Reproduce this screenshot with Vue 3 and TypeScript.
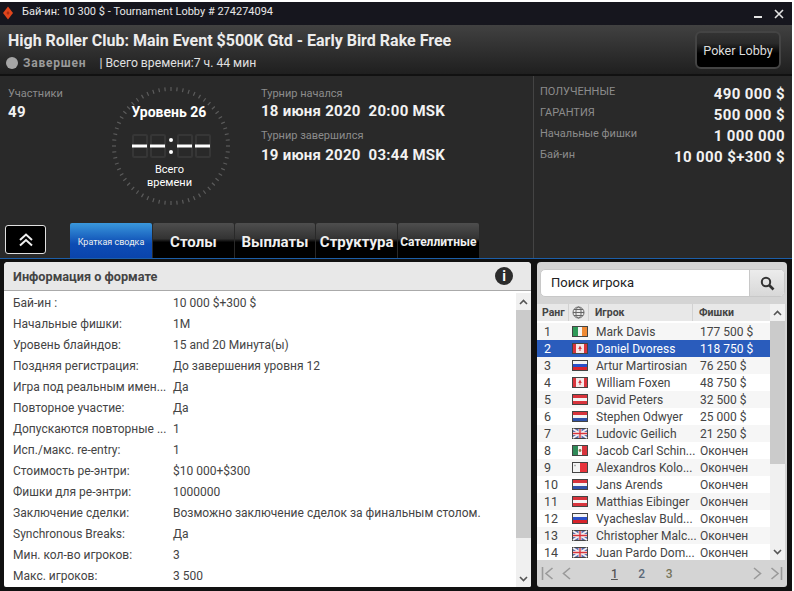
<script setup lang="ts">
interface Player {
  rank: number
  flag: string
  name: string
  chips: string
}

const info: [string, string][] = [
  ['Бай-ин :', '10 000 $+300 $'],
  ['Начальные фишки:', '1M'],
  ['Уровень блайндов:', '15 and 20 Минута(ы)'],
  ['Поздняя регистрация:', 'До завершения уровня 12'],
  ['Игра под реальным имен...', 'Да'],
  ['Повторное участие:', 'Да'],
  ['Допускаются повторные ...', '1'],
  ['Исп./макс. re-entry:', '1'],
  ['Стоимость ре-энтри:', '$10 000+$300'],
  ['Фишки для ре-энтри:', '1000000'],
  ['Заключение сделки:', 'Возможно заключение сделок за финальным столом.'],
  ['Synchronous Breaks:', 'Да'],
  ['Мин. кол-во игроков:', '3'],
  ['Макс. игроков:', '3 500'],
]

const players: Player[] = [
  { rank: 1, flag: 'ie', name: 'Mark Davis', chips: '177 500 $' },
  { rank: 2, flag: 'ca', name: 'Daniel Dvoress', chips: '118 750 $' },
  { rank: 3, flag: 'ru', name: 'Artur Martirosian', chips: '76 250 $' },
  { rank: 4, flag: 'ca', name: 'William Foxen', chips: '48 750 $' },
  { rank: 5, flag: 'at', name: 'David Peters', chips: '32 500 $' },
  { rank: 6, flag: 'nl', name: 'Stephen Odwyer', chips: '25 000 $' },
  { rank: 7, flag: 'gb', name: 'Ludovic Geilich', chips: '21 250 $' },
  { rank: 8, flag: 'mx', name: 'Jacob Carl Schin...', chips: 'Окончен' },
  { rank: 9, flag: 'mt', name: 'Alexandros Kolo...', chips: 'Окончен' },
  { rank: 10, flag: 'nl', name: 'Jans Arends', chips: 'Окончен' },
  { rank: 11, flag: 'at', name: 'Matthias Eibinger', chips: 'Окончен' },
  { rank: 12, flag: 'ru', name: 'Vyacheslav Buld...', chips: 'Окончен' },
  { rank: 13, flag: 'gb', name: 'Christopher Malc...', chips: 'Окончен' },
  { rank: 14, flag: 'gb', name: 'Juan Pardo Dom...', chips: 'Окончен' },
]

const stripes: Record<string, string[]> = {
  ru: ['#f4f4f4', '#2a4fc8', '#d8242c'],
  nl: ['#d8343c', '#f4f4f4', '#2f52a8'],
  at: ['#d8343c', '#f4f4f4', '#d8343c'],
}

const ticks = Array.from({ length: 60 }, (_, i) => {
  const a = (i * 6 * Math.PI) / 180
  return {
    x1: 60 + Math.sin(a) * 55,
    y1: 60 - Math.cos(a) * 55,
    x2: 60 + Math.sin(a) * 59,
    y2: 60 - Math.cos(a) * 59,
  }
})

const ghostDigits = [0, 18, 45, 63]
</script>

<template>
  <div class="window">
    <div class="titlebar">
      <svg class="logo" width="12" height="14" viewBox="0 0 12 14">
        <path d="M6 0.5 11 7 6 13.5 1 7Z" fill="#e0451c" />
        <path d="M6 5 7.6 7 6 9 4.4 7Z" fill="#a82c14" />
      </svg>
      <span class="title-text">Бай-ин: 10 300 $ - Tournament Lobby # 274274094</span>
      <span class="win-min"></span>
      <svg class="win-close" width="10" height="10" viewBox="0 0 10 10">
        <path d="M1 1 9 9M9 1 1 9" stroke="#e4e4e4" stroke-width="1.6" />
      </svg>
    </div>

    <div class="header">
      <div class="head-left">
        <div class="event-name">High Roller Club: Main Event $500K Gtd - Early Bird Rake Free</div>
        <div class="status">
          <span class="dot"></span>
          <span class="status-name">Завершен</span>
          <span class="status-time">| Всего времени:7 ч. 44 мин</span>
        </div>
      </div>
      <button class="lobby-btn">Poker Lobby</button>
    </div>

    <div class="summary">
      <div class="summary-left">
        <div class="summary-top">
          <div class="players-col">
            <div class="label">Участники</div>
            <div class="big">49</div>
          </div>
          <div class="clock">
            <svg class="ring" width="120" height="120" viewBox="0 0 120 120">
              <line
                v-for="(t, i) in ticks"
                :key="i"
                :x1="t.x1"
                :y1="t.y1"
                :x2="t.x2"
                :y2="t.y2"
                stroke="#5c5c5c"
                stroke-width="1.2"
              />
            </svg>
            <div class="level">Уровень 26</div>
            <svg class="digits" width="80" height="24" viewBox="0 0 80 24">
              <rect
                v-for="x in ghostDigits"
                :key="x"
                :x="x + 1"
                y="1"
                width="14"
                height="22"
                rx="1"
                fill="none"
                stroke="#363636"
                stroke-width="2"
              />
              <path d="M0 12H15M18 12H33M45 12H60M63 12H78" stroke="#fff" stroke-width="3" />
              <circle cx="39" cy="6" r="2" fill="#fff" />
              <circle cx="39" cy="18" r="2" fill="#fff" />
            </svg>
            <div class="clock-note">Всего<br />времени</div>
          </div>
          <div class="dates">
            <div class="label">Турнир начался</div>
            <div class="big date">18 июня 2020&nbsp; 20:00 MSK</div>
            <div class="label second">Турнир завершился</div>
            <div class="big date last">19 июня 2020&nbsp; 03:44 MSK</div>
          </div>
        </div>
        <div class="tabs-row">
          <button class="collapse">
            <svg width="16" height="14" viewBox="0 0 16 14">
              <path d="M2 7 8 1.5 14 7M2 12.5 8 7 14 12.5" fill="none" stroke="#f0f0f0" stroke-width="2" />
            </svg>
          </button>
          <div class="tabs">
            <div class="tab active">Краткая сводка</div>
            <div class="tab">Столы</div>
            <div class="tab">Выплаты</div>
            <div class="tab">Структура</div>
            <div class="tab small">Сателлитные</div>
          </div>
        </div>
      </div>
      <div class="prizes">
        <div class="prize"><span class="label">ПОЛУЧЕННЫЕ</span><span class="big">490 000 $</span></div>
        <div class="prize"><span class="label">ГАРАНТИЯ</span><span class="big">500 000 $</span></div>
        <div class="prize"><span class="label">Начальные фишки</span><span class="big">1 000 000</span></div>
        <div class="prize"><span class="label">Бай-ин</span><span class="big">10 000 $+300 $</span></div>
      </div>
    </div>

    <div class="content">
      <section class="info-panel">
        <div class="info-head">
          <span>Информация о формате</span>
          <span class="info-icon">i</span>
        </div>
        <div class="info-body">
          <div class="info-rows">
            <div v-for="row in info" :key="row[0]" class="info-row">
              <span class="info-key">{{ row[0] }}</span>
              <span>{{ row[1] }}</span>
            </div>
          </div>
          <div class="scrollbar wide">
            <svg class="arrow" width="9" height="6" viewBox="0 0 9 6"><path d="M1 5 4.5 1.5 8 5" fill="none" stroke="#555" stroke-width="1.6" /></svg>
            <div class="track"><div class="thumb info-thumb"></div></div>
            <svg class="arrow" width="9" height="6" viewBox="0 0 9 6"><path d="M1 1 4.5 4.5 8 1" fill="none" stroke="#555" stroke-width="1.6" /></svg>
          </div>
        </div>
      </section>

      <section class="players-panel">
        <div class="search">
          <span class="search-text">Поиск игрока</span>
          <span class="search-btn">
            <svg width="15" height="15" viewBox="0 0 15 15">
              <circle cx="6" cy="6" r="4.2" fill="none" stroke="#333" stroke-width="2" />
              <path d="M9 9 13.5 13.5" stroke="#333" stroke-width="2.6" />
            </svg>
          </span>
        </div>
        <div class="table-wrap">
          <div class="table">
            <div class="thead">
              <span class="c-rank">Ранг</span>
              <span class="c-flag">
                <svg width="13" height="13" viewBox="0 0 13 13" fill="none" stroke="#666" stroke-width="1">
                  <circle cx="6.5" cy="6.5" r="5.5" />
                  <ellipse cx="6.5" cy="6.5" rx="2.6" ry="5.5" />
                  <path d="M1 6.5H12M2 3.5H11M2 9.5H11" />
                </svg>
              </span>
              <span class="c-name">Игрок</span>
              <span class="c-chips">Фишки</span>
            </div>
            <div class="rows">
              <div
                v-for="p in players"
                :key="p.rank"
                class="trow"
                :class="{ selected: p.rank === 2 }"
              >
                <span class="c-rank">{{ p.rank }}</span>
                <span class="c-flag">
                  <svg class="flag" width="16" height="11" viewBox="0 0 16 11">
                    <rect width="16" height="11" fill="#444" />
                    <g v-if="stripes[p.flag]">
                      <rect
                        v-for="(color, i) in stripes[p.flag]"
                        :key="i"
                        x="1"
                        :y="1 + i * 3"
                        width="14"
                        height="3"
                        :fill="color"
                      />
                    </g>
                    <g v-else-if="p.flag === 'ie'">
                      <rect x="1" y="1" width="5" height="9" fill="#2f9a58" />
                      <rect x="6" y="1" width="4" height="9" fill="#f4f4f4" />
                      <rect x="10" y="1" width="5" height="9" fill="#ef8a34" />
                    </g>
                    <g v-else-if="p.flag === 'ca'">
                      <rect x="1" y="1" width="14" height="9" fill="#f6e8e8" />
                      <rect x="1" y="1" width="3" height="9" fill="#d8343c" />
                      <rect x="12" y="1" width="3" height="9" fill="#d8343c" />
                      <path d="M8 2.5 9.8 6 8.5 6 8.5 8 7.5 8 7.5 6 6.2 6Z" fill="#d8343c" />
                    </g>
                    <g v-else-if="p.flag === 'mx'">
                      <rect x="1" y="1" width="5" height="9" fill="#2f8a58" />
                      <rect x="6" y="1" width="4" height="9" fill="#f4f4f4" />
                      <rect x="10" y="1" width="5" height="9" fill="#d8343c" />
                      <circle cx="8" cy="5.5" r="1.4" fill="#8a7a4a" />
                    </g>
                    <g v-else-if="p.flag === 'mt'">
                      <rect x="1" y="1" width="7" height="9" fill="#f4f4f4" />
                      <rect x="8" y="1" width="7" height="9" fill="#e8343c" />
                      <path d="M2 3.5H4M3 2.5V4.5" stroke="#aaa" stroke-width="0.8" />
                    </g>
                    <g v-else>
                      <rect x="1" y="1" width="14" height="9" fill="#5a6cb0" />
                      <path d="M1 1 15 10M15 1 1 10" stroke="#f4f0f0" stroke-width="1.8" />
                      <path d="M8 1V10M1 5.5H15" stroke="#f4f0f0" stroke-width="3" />
                      <path d="M8 1V10M1 5.5H15" stroke="#d8343c" stroke-width="1.4" />
                    </g>
                  </svg>
                </span>
                <span class="c-name">{{ p.name }}</span>
                <span class="c-chips">{{ p.chips }}</span>
              </div>
            </div>
          </div>
          <div class="scrollbar narrow">
            <svg class="arrow" width="9" height="6" viewBox="0 0 9 6"><path d="M1 5 4.5 1.5 8 5" fill="none" stroke="#555" stroke-width="1.6" /></svg>
            <div class="track"><div class="thumb list-thumb"></div></div>
            <svg class="arrow" width="9" height="6" viewBox="0 0 9 6"><path d="M1 1 4.5 4.5 8 1" fill="none" stroke="#555" stroke-width="1.6" /></svg>
          </div>
        </div>
        <div class="pager">
          <svg width="13" height="13" viewBox="0 0 13 13" fill="none" stroke="#9a9a9a" stroke-width="1.6"><path d="M1.5 0V13M11.5 1 5 6.5 11.5 12" /></svg>
          <svg class="p-prev" width="9" height="13" viewBox="0 0 9 13" fill="none" stroke="#9a9a9a" stroke-width="1.6"><path d="M8 1 1.5 6.5 8 12" /></svg>
          <div class="pages">
            <span class="page current">1</span>
            <span class="page second-page">2</span>
            <span class="page third-page">3</span>
          </div>
          <svg class="p-next" width="9" height="13" viewBox="0 0 9 13" fill="none" stroke="#9a9a9a" stroke-width="1.6"><path d="M1 1 7.5 6.5 1 12" /></svg>
          <svg width="13" height="13" viewBox="0 0 13 13" fill="none" stroke="#9a9a9a" stroke-width="1.6"><path d="M11.5 0V13M1.5 1 8 6.5 1.5 12" /></svg>
        </div>
      </section>
    </div>
  </div>
</template>

<style>
html,
body {
  margin: 0;
  background: #fff;
}
</style>

<style scoped>
.window {
  width: 792px;
  height: 589px;
  margin-top: 2px;
  background: #1a1a1a;
  font-family: Roboto, "Liberation Sans", sans-serif;
  display: flex;
  flex-direction: column;
  overflow: hidden;
}

.titlebar {
  height: 23px;
  flex: none;
  background: #16161e;
  display: flex;
  align-items: center;
  padding: 0 8px 0 2px;
  box-sizing: border-box;
  color: #e8e8e8;
  font-size: 11px;
}

.logo {
  margin-bottom: 2px;
}

.title-text {
  margin: 0 0 4px 8px;
  flex: 1;
}

.win-min {
  width: 8px;
  height: 2px;
  background: #e4e4e4;
  margin: 6px 12px 0 0;
}

.header {
  height: 51px;
  flex: none;
  background: linear-gradient(#414141, #1f1f1f);
  border-bottom: 2px solid #111;
  display: flex;
  justify-content: space-between;
  padding: 0 11px 0 8px;
  box-sizing: border-box;
}

.event-name {
  margin-top: 6px;
  font-size: 16px;
  font-weight: 700;
  color: #ececec;
  line-height: 20px;
}

.status {
  display: flex;
  align-items: center;
  margin-top: 4px;
  margin-left: -2px;
  font-size: 12.2px;
  color: #e0e0e0;
  line-height: 16px;
}

.dot {
  width: 12px;
  height: 12px;
  border-radius: 50%;
  background: #a6a6a6;
  margin-right: 5px;
}

.status-name {
  font-weight: 700;
  font-size: 12px;
  color: #9a9a9a;
  letter-spacing: 0.8px;
  margin-right: 13px;
}

.lobby-btn {
  width: 86px;
  height: 38px;
  margin-top: 6px;
  border: 2px solid #444;
  border-radius: 6px;
  background: linear-gradient(#333 0, #2a2a2a 30%, #000 60%, #000 100%);
  color: #ddd;
  font: 12.6px Roboto, sans-serif;
  padding: 0;
}

.summary {
  flex: none;
  height: 183px;
  background: #292929;
  border-bottom: 1px solid #1c5ea8;
  box-sizing: border-box;
  display: flex;
}

.summary-left {
  width: 534px;
  flex: none;
  border-right: 1px solid #444;
  display: flex;
  flex-direction: column;
  box-sizing: border-box;
}

.summary-top {
  height: 145px;
  display: flex;
  flex: none;
}

.label {
  font-size: 11px;
  color: #8c8c8c;
  line-height: 14px;
}

.big {
  font-size: 15px;
  font-weight: 700;
  color: #f2f2f2;
  line-height: 18px;
  letter-spacing: 0.4px;
}

.players-col {
  width: 111px;
  padding: 11px 0 0 8px;
  box-sizing: border-box;
}

.players-col .big {
  margin-top: 2px;
}

.clock {
  position: relative;
  width: 120px;
  height: 120px;
  margin-top: 10px;
  color: #fff;
  text-align: center;
  flex: none;
}

.ring {
  position: absolute;
  left: 0;
  top: 0;
}

.level {
  position: relative;
  padding: 18px 4px 0 0;
  font-size: 14px;
  font-weight: 700;
  line-height: 16px;
}

.digits {
  position: relative;
  display: block;
  margin: 14px 0 0 21px;
}

.clock-note {
  position: relative;
  font-size: 11px;
  line-height: 13px;
  margin-top: 5px;
  padding-right: 3px;
}

.dates {
  padding: 11px 0 0 30px;
}

.date {
  margin-top: 1px;
  letter-spacing: 0.25px;
}

.second {
  margin-top: 9px;
}

.date.last {
  margin-top: 3px;
}

.tabs-row {
  display: flex;
  align-items: flex-start;
  flex: 1;
}

.collapse {
  width: 41px;
  height: 29px;
  margin: 4px 0 0 5px;
  background: #000;
  border: 1px solid #e0e0e0;
  border-radius: 3px;
  padding: 0;
  display: flex;
  align-items: center;
  justify-content: center;
}

.tabs {
  display: flex;
  margin: 2px 0 0 24px;
  height: 35px;
}

.tab {
  width: 80.67px;
  margin-right: 1px;
  height: 35px;
  background: linear-gradient(#4e4e4e 0, #333 45%, #000 55%, #000 100%);
  color: #f0f0f0;
  font-size: 15px;
  font-weight: 700;
  display: flex;
  align-items: center;
  justify-content: center;
  white-space: nowrap;
  padding-top: 2px;
  box-sizing: border-box;
  border-radius: 2px 2px 0 0;
}

.tab.small {
  font-size: 12px;
}

.tab.active {
  width: 82px;
  background: linear-gradient(#3a98dc, #0d4cb4 60%, #0a44ac);
  font-size: 9px;
  font-weight: 400;
}

.prizes {
  flex: 1;
  padding: 9px 7px 0 6px;
}

.prize {
  display: flex;
  justify-content: space-between;
  height: 21px;
  line-height: 14px;
}

.content {
  flex: 1;
  min-height: 0;
  display: flex;
  padding: 3px 5px 4px 4px;
  gap: 6px;
  background: #111;
}

.info-panel {
  width: 527px;
  flex: none;
  background: #fff;
  border-radius: 4px 4px 2px 2px;
  overflow: hidden;
  display: flex;
  flex-direction: column;
}

.info-head {
  height: 29px;
  flex: none;
  box-sizing: border-box;
  background: #e8e8e8;
  border-bottom: 1px solid #aaa;
  display: flex;
  align-items: center;
  justify-content: space-between;
  padding: 0 18px 0 9px;
  font-size: 12.7px;
  font-weight: 700;
  color: #444;
}

.info-icon {
  width: 18px;
  height: 18px;
  border-radius: 50%;
  background: #2c2c2c;
  color: #fff;
  font-size: 14px;
  text-align: center;
  line-height: 18px;
}

.info-body {
  flex: 1;
  display: flex;
  min-height: 0;
}

.info-rows {
  flex: 1;
  padding: 2px 0 0 9px;
  overflow: hidden;
}

.info-row {
  display: flex;
  height: 21px;
  line-height: 21px;
  font-size: 12px;
  color: #444;
  white-space: nowrap;
}

.info-key {
  width: 160px;
  flex: none;
}

.scrollbar {
  flex: none;
  display: flex;
  flex-direction: column;
  align-items: center;
  background: #f0f0f0;
  width: 15px;
}

.wide {
  margin-top: 2px;
}

.arrow {
  flex: none;
  margin: 6px 0 5px;
}

.track {
  flex: 1;
  width: 100%;
}

.thumb {
  background: #cbcbcb;
}

.info-thumb {
  height: 228px;
}

.list-thumb {
  height: 143px;
}

.players-panel {
  flex: 1;
  background: #d4d4d4;
  border-radius: 4px 4px 3px 3px;
  display: flex;
  flex-direction: column;
  overflow: hidden;
}

.search {
  margin: 7px 2px 0 3px;
  height: 28px;
  flex: none;
  border: 1px solid #c8c8c8;
  border-radius: 5px;
  background: #fff;
  display: flex;
  justify-content: space-between;
  box-sizing: border-box;
  overflow: hidden;
}

.search-text {
  padding-left: 10px;
  line-height: 26px;
  font-size: 13px;
  color: #222;
}

.search-btn {
  width: 34px;
  background: linear-gradient(#ececec, #d8d8d8);
  border-left: 1px solid #c8c8c8;
  display: flex;
  align-items: center;
  justify-content: center;
}

.table-wrap {
  margin: 7px 2px 0 0;
  height: 256px;
  flex: none;
  display: flex;
  background: #fff;
  overflow: hidden;
}

.table {
  flex: 1;
  min-width: 0;
}

.thead,
.trow {
  display: flex;
  align-items: center;
}

.thead {
  height: 17px;
  background: #e8e8e8;
  font-size: 10.5px;
  font-weight: 700;
  color: #444;
}

.thead span {
  border-right: 1px solid #d2d2d2;
  box-sizing: border-box;
  line-height: 17px;
  height: 17px;
}

.thead .c-rank {
  padding-left: 5px;
  font-size: 10.5px;
}

.thead .c-flag {
  align-items: center;
}

.thead .c-name,
.thead .c-chips {
  padding-left: 6px;
}

.thead .c-chips {
  border: none;
}

.rows {
  padding-top: 2px;
}

.trow {
  height: 17px;
  font-size: 12px;
  color: #444;
  white-space: nowrap;
}

.trow:nth-child(odd) {
  background: #f6f6f6;
}

.trow.selected {
  background: #2a5cbc;
  color: #fff;
}

.c-rank {
  width: 32px;
  padding-left: 7px;
  box-sizing: border-box;
  flex: none;
  font-size: 12.5px;
}

.c-flag {
  width: 20px;
  flex: none;
  display: flex;
  justify-content: center;
}

.c-name {
  width: 104px;
  flex: none;
  padding-left: 7px;
  box-sizing: border-box;
}

.c-chips {
  padding-left: 7px;
  flex: 1;
}

.flag {
  display: block;
  margin-left: 2px;
}

.pager {
  height: 27px;
  flex: none;
  display: flex;
  align-items: center;
  padding: 0 4px;
  box-sizing: border-box;
}

.p-prev {
  margin-left: 8px;
}

.p-next {
  margin-right: 8px;
}

.pages {
  flex: 1;
  display: flex;
  padding-left: 40px;
  gap: 20.5px;
  font-size: 12px;
  font-weight: 500;
  color: #666;
}

.page.current {
  text-decoration: underline;
  color: #555;
}

.second-page {
  color: #5a6878;
}

.third-page {
  color: #77745a;
}
</style>
